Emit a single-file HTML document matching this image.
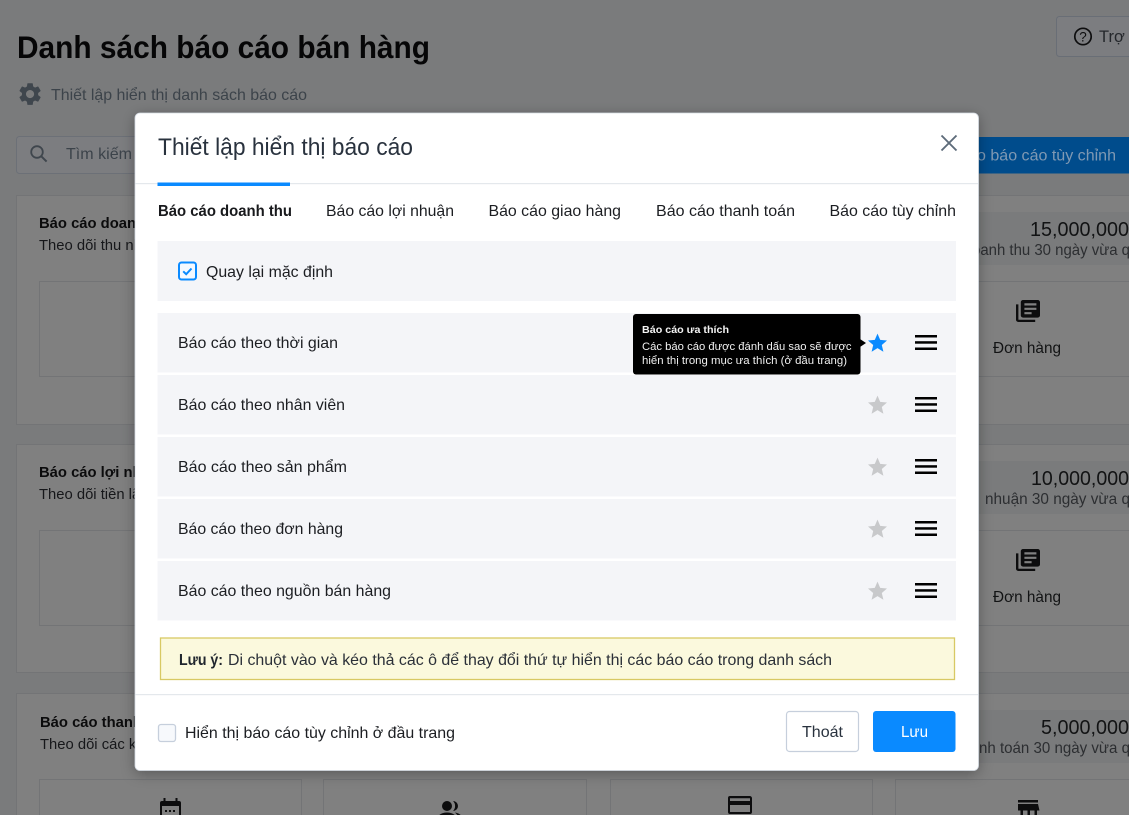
<!DOCTYPE html>
<html lang="vi"><head><meta charset="utf-8"><title>Danh sách báo cáo bán hàng</title>
<style>
html,body{margin:0;padding:0;width:1129px;height:815px;overflow:hidden;background:#7a7b7c}
svg{display:block}
text{font-family:"Liberation Sans",sans-serif;font-size:16px;fill:#1f2328}
.b{font-weight:bold}
</style></head><body>
<svg width="1129" height="815" viewBox="0 0 1129 815" xmlns="http://www.w3.org/2000/svg">
<defs>
<filter id="sh" x="-5%" y="-5%" width="110%" height="110%"><feDropShadow dx="0" dy="3" stdDeviation="7" flood-color="#000" flood-opacity=".32"/></filter>
<path id="star" d="M10 0.8l2.7 6.3 6.8.6-5.2 4.5 1.6 6.7L10 15.3l-5.9 3.6 1.6-6.7L.5 7.7l6.8-.6z"/>
<g id="ham" fill="#000"><rect x="0" y="0" width="22" height="2.5"/><rect x="0" y="6.200" width="22" height="2.5"/><rect x="0" y="12.500" width="22" height="2.5"/></g>
<path id="lib" d="M4 6H2v14c0 1.100.9 2 2 2h14v-2H4V6zm16-4H8c-1.100 0-2 .9-2 2v12c0 1.100.9 2 2 2h12c1.100 0 2-.9 2-2V4c0-1.100-.9-2-2-2zm-1 9H9V9h10v2zm-4 4H9v-2h6v2zm4-8H9V5h10v2z"/>
</defs>
<rect width="1129" height="815" fill="#7a7b7c"/>

<!-- background page -->
<text x="17" y="58" class="b" style="font-size:31.500px;fill:#060607" textLength="413" lengthAdjust="spacingAndGlyphs">Danh sách báo cáo bán hàng</text>
<path transform="translate(16.500,80.500) scale(1.130)" fill="#3f464d" d="M19.140 12.940c.04-.3.060-.61.060-.94 0-.32-.02-.64-.07-.94l2.030-1.580c.18-.14.23-.41.12-.61l-1.920-3.320c-.12-.22-.37-.29-.59-.22l-2.390.96c-.5-.38-1.030-.7-1.620-.94l-.36-2.540c-.04-.24-.24-.41-.48-.41h-3.840c-.24 0-.43.17-.47.41l-.36 2.540c-.59.24-1.130.57-1.620.94l-2.390-.96c-.22-.08-.47 0-.59.22L2.740 8.870c-.12.21-.08.47.12.61l2.030 1.580c-.05.3-.09.63-.09.94s.02.64.07.94l-2.030 1.580c-.18.14-.23.41-.12.61l1.920 3.320c.12.22.37.29.59.22l2.390-.96c.5.38 1.030.7 1.620.94l.36 2.540c.05.24.24.41.48.41h3.840c.24 0 .44-.17.47-.41l.36-2.540c.59-.24 1.130-.56 1.620-.94l2.390.96c.22.08.47 0 .59-.22l1.920-3.320c.12-.22.07-.47-.12-.61l-2.010-1.580zM12 15.600c-1.980 0-3.600-1.620-3.600-3.600s1.620-3.600 3.600-3.600 3.600 1.620 3.600 3.600-1.620 3.600-3.600 3.600z"/>
<text x="51" y="100" style="fill:#3c434a" textLength="256" lengthAdjust="spacingAndGlyphs">Thiết lập hiển thị danh sách báo cáo</text>

<rect x="16.500" y="136.500" width="140" height="37" rx="3" fill="#7c7d80" stroke="#6c7077"/>
<circle cx="37" cy="152" r="5.800" fill="none" stroke="#3f464d" stroke-width="1.800"/>
<path d="M41.200 156.200l5.400 5.400" stroke="#3f464d" stroke-width="2" fill="none"/>
<text x="66" y="159" style="fill:#3c434a" textLength="66" lengthAdjust="spacingAndGlyphs">Tìm kiếm</text>

<rect x="1056.500" y="16.500" width="90" height="40" rx="3" fill="#7c7d80" stroke="#696e76"/>
<circle cx="1083" cy="36.500" r="8.200" fill="none" stroke="#0e0e0f" stroke-width="1.700"/>
<text x="1083" y="41.500" text-anchor="middle" style="font-size:13.500px;fill:#0e0e0f">?</text>
<text x="1099" y="42" style="font-size:16.500px;fill:#24272b">Trợ giúp</text>

<rect x="960" y="137" width="169" height="36.500" fill="#004c8c"/>
<text x="977" y="160.500" style="fill:#7f99b3" textLength="139" lengthAdjust="spacingAndGlyphs">o báo cáo tùy chỉnh</text>

<g fill="#808080" stroke="#737476">
<rect x="16.500" y="195.500" width="1130" height="229"/>
<rect x="16.500" y="444.500" width="1130" height="228"/>
<rect x="16.500" y="693.500" width="1130" height="140"/>
<rect x="39.500" y="281.500" width="262" height="95"/>
<rect x="39.500" y="530.500" width="262" height="95"/>
<rect x="39.500" y="779.500" width="262" height="60"/>
<rect x="323.500" y="779.500" width="263" height="60"/>
<rect x="610.500" y="779.500" width="262" height="60"/>
<rect x="895.500" y="281.500" width="262" height="95"/>
<rect x="895.500" y="530.500" width="262" height="95"/>
<rect x="895.500" y="779.500" width="262" height="60"/>
</g>
<g fill="#7a7b7c">
<rect x="970" y="212" width="159" height="53"/>
<rect x="970" y="461" width="159" height="53"/>
<rect x="970" y="710" width="159" height="53"/>
</g>

<text x="39" y="228" class="b" style="font-size:14.800px;fill:#0b0b0c">Báo cáo doanh thu</text>
<text x="39" y="250" style="font-size:14.800px;fill:#16171a">Theo dõi thu nhập</text>
<text x="39" y="477" class="b" style="font-size:14.800px;fill:#0b0b0c">Báo cáo lợi nhuận</text>
<text x="39" y="499" style="font-size:14.800px;fill:#16171a">Theo dõi tiền lãi</text>
<text x="40" y="727" class="b" style="font-size:14.800px;fill:#0b0b0c">Báo cáo thanh toán</text>
<text x="40" y="749" style="font-size:14.800px;fill:#16171a">Theo dõi các khoản</text>

<text x="1030" y="236" style="font-size:20px;fill:#121314" textLength="99" lengthAdjust="spacingAndGlyphs">15,000,000</text>
<text x="972" y="255" style="font-size:16px;fill:#2c2e31" textLength="158" lengthAdjust="spacingAndGlyphs">oanh thu 30 ngày vừa q</text>
<text x="1031" y="485" style="font-size:20px;fill:#121314" textLength="98" lengthAdjust="spacingAndGlyphs">10,000,000</text>
<text x="985" y="504" style="font-size:16px;fill:#2c2e31" textLength="145" lengthAdjust="spacingAndGlyphs">nhuận 30 ngày vừa q</text>
<text x="1041" y="734" style="font-size:20px;fill:#121314" textLength="88" lengthAdjust="spacingAndGlyphs">5,000,000</text>
<text x="979" y="753" style="font-size:16px;fill:#2c2e31" textLength="151" lengthAdjust="spacingAndGlyphs">nh toán 30 ngày vừa q</text>

<use href="#lib" transform="translate(1013.600,297.800) scale(1.200,1.100)" fill="#0d0d0e"/>
<text x="993" y="353" style="fill:#121314" textLength="68" lengthAdjust="spacingAndGlyphs">Đơn hàng</text>
<use href="#lib" transform="translate(1013.600,546.800) scale(1.200,1.100)" fill="#0d0d0e"/>
<text x="993" y="602" style="fill:#121314" textLength="68" lengthAdjust="spacingAndGlyphs">Đơn hàng</text>

<!-- bottom row icons -->
<g transform="translate(1,3)">
<path fill="#0d0d0e" d="M161 798h17a2 2 0 0 1 2 2v16h-21v-16a2 2 0 0 1 2-2zm-0 5v10h17v-10zM162.500 798v-3h2v3zM174.500 798v-3h2v3z" fill-rule="evenodd"/>
<g fill="#0d0d0e"><rect x="164" y="807" width="2" height="2"/><rect x="168" y="807" width="2" height="2"/><rect x="172" y="807" width="2" height="2"/></g>
</g>
<circle cx="447" cy="806" r="5" fill="#0d0d0e"/>
<path d="M453 801a5 5 0 0 1 0 10 7 7 0 0 0 0-10z" fill="#0d0d0e"/>
<path d="M437 820c0-5 5-7.500 10-7.500s10 2.500 10 7.500zM455 812.500c4 .5 7 3 8 6l-4 1c0-3-2-5-4-7z" fill="#0d0d0e"/>
<path fill="#0d0d0e" fill-rule="evenodd" d="M730 796h20a2.500 2.500 0 0 1 2 2v14a2 2 0 0 1-2 2h-20a2 2 0 0 1-2-2v-14a2 2 0 0 1 2-2zm0 2.200v2.800h20v-2.800zm0 6.800v7h20v-7z"/>
<path fill="#0d0d0e" d="M1018 800h20v2.500h-20zM1018 804h20l1.500 6.500h-2.500v6h-2.500v-6h-4.500v6h-2.500v-6h-4.500v6h-2.500v-6h-2.500z"/>

<!-- modal -->
<rect x="135" y="113" width="843.500" height="657.500" rx="5" fill="#fff" filter="url(#sh)"/>
<rect x="135" y="113" width="843.500" height="657.500" rx="5" fill="none" stroke="#d5dbe3" stroke-width=".8"/>
<text x="158" y="155" style="font-size:24px;fill:#29323e" textLength="255" lengthAdjust="spacingAndGlyphs">Thiết lập hiển thị báo cáo</text>
<path d="M941.500 135.500l15 15M956.500 135.500l-15 15" stroke="#5d6b7a" stroke-width="1.900" fill="none"/>
<rect x="135.500" y="183" width="842.500" height="1.200" fill="#e4e8ec"/>
<rect x="157.500" y="182.500" width="132.500" height="3.500" fill="#0a8aff"/>

<text x="158" y="216" class="b" style="fill:#18191c" textLength="134" lengthAdjust="spacingAndGlyphs">Báo cáo doanh thu</text>
<text x="326" y="216" style="fill:#1c1e22" textLength="128" lengthAdjust="spacingAndGlyphs">Báo cáo lợi nhuận</text>
<text x="488.500" y="216" style="fill:#1c1e22" textLength="132.500" lengthAdjust="spacingAndGlyphs">Báo cáo giao hàng</text>
<text x="656" y="216" style="fill:#1c1e22" textLength="139" lengthAdjust="spacingAndGlyphs">Báo cáo thanh toán</text>
<text x="829.500" y="216" style="fill:#1c1e22" textLength="126.500" lengthAdjust="spacingAndGlyphs">Báo cáo tùy chỉnh</text>

<rect x="157.500" y="241" width="798.500" height="60" fill="#f4f5f8"/>
<rect x="179" y="262.500" width="17" height="17" rx="2.500" fill="#f4f9ff" stroke="#0a8aff" stroke-width="2"/>
<path d="M183.200 271.300l3 2.900 5.300-5.700" fill="none" stroke="#0a8aff" stroke-width="2"/>
<text x="206" y="277" style="fill:#1c1e22" textLength="127" lengthAdjust="spacingAndGlyphs">Quay lại mặc định</text>

<g fill="#f4f5f8">
<rect x="157.500" y="313" width="798.500" height="59.500"/>
<rect x="157.500" y="375" width="798.500" height="59.500"/>
<rect x="157.500" y="437" width="798.500" height="59.500"/>
<rect x="157.500" y="499" width="798.500" height="59.500"/>
<rect x="157.500" y="561" width="798.500" height="59.500"/>
</g>
<text x="178" y="348" style="fill:#1c1e22" textLength="160" lengthAdjust="spacingAndGlyphs">Báo cáo theo thời gian</text>
<text x="178" y="410" style="fill:#1c1e22" textLength="167" lengthAdjust="spacingAndGlyphs">Báo cáo theo nhân viên</text>
<text x="178" y="472" style="fill:#1c1e22" textLength="169" lengthAdjust="spacingAndGlyphs">Báo cáo theo sản phẩm</text>
<text x="178" y="534" style="fill:#1c1e22" textLength="165" lengthAdjust="spacingAndGlyphs">Báo cáo theo đơn hàng</text>
<text x="178" y="596" style="fill:#1c1e22" textLength="213" lengthAdjust="spacingAndGlyphs">Báo cáo theo nguồn bán hàng</text>

<use href="#star" x="867.500" y="332.800" fill="#0a8aff"/>
<use href="#star" x="867.500" y="394.800" fill="#c8c9cb"/>
<use href="#star" x="867.500" y="456.800" fill="#c8c9cb"/>
<use href="#star" x="867.500" y="518.800" fill="#c8c9cb"/>
<use href="#star" x="867.500" y="580.800" fill="#c8c9cb"/>
<use href="#ham" x="915" y="335"/>
<use href="#ham" x="915" y="397"/>
<use href="#ham" x="915" y="459"/>
<use href="#ham" x="915" y="521"/>
<use href="#ham" x="915" y="583"/>

<!-- tooltip -->
<rect x="633" y="314" width="227.500" height="60.500" rx="3" fill="#000"/>
<path d="M860 339l6 4-6 4z" fill="#000"/>
<text x="642" y="333" class="b" style="font-size:10.500px;fill:#f4f4f4" textLength="87" lengthAdjust="spacingAndGlyphs">Báo cáo ưa thích</text>
<text x="642" y="350" style="font-size:10.800px;fill:#f0f0f0" textLength="209.500" lengthAdjust="spacingAndGlyphs">Các báo cáo được đánh dấu sao sẽ được</text>
<text x="642" y="364" style="font-size:10.800px;fill:#f0f0f0" textLength="205" lengthAdjust="spacingAndGlyphs">hiển thị trong mục ưa thích (ở đầu trang)</text>

<!-- note -->
<rect x="160.500" y="638" width="794" height="41.500" fill="#fbf9dd" stroke="#d8c964" stroke-width="1.300"/>
<text x="179" y="665" class="b" style="fill:#20262e" textLength="44" lengthAdjust="spacingAndGlyphs">Lưu ý:</text>
<text x="228" y="665" style="fill:#2b3038" textLength="604" lengthAdjust="spacingAndGlyphs">Di chuột vào và kéo thả các ô để thay đổi thứ tự hiển thị các báo cáo trong danh sách</text>

<rect x="135.500" y="694" width="842.500" height="1.200" fill="#e4e8ec"/>
<rect x="158.500" y="724.500" width="17" height="17" rx="2.500" fill="#f7f9fc" stroke="#c6cfdc" stroke-width="1.300"/>
<text x="185" y="738" style="fill:#1c1e22" textLength="270" lengthAdjust="spacingAndGlyphs">Hiển thị báo cáo tùy chỉnh ở đầu trang</text>
<rect x="786.500" y="711.500" width="72" height="40" rx="3" fill="#fff" stroke="#c6cfdc" stroke-width="1.200"/>
<text x="802" y="737" style="fill:#29323e" textLength="41" lengthAdjust="spacingAndGlyphs">Thoát</text>
<rect x="873" y="711" width="82.500" height="41" rx="3" fill="#0a8aff"/>
<text x="901" y="737" style="fill:#fff" textLength="27" lengthAdjust="spacingAndGlyphs">Lưu</text>
</svg>
</body></html>
